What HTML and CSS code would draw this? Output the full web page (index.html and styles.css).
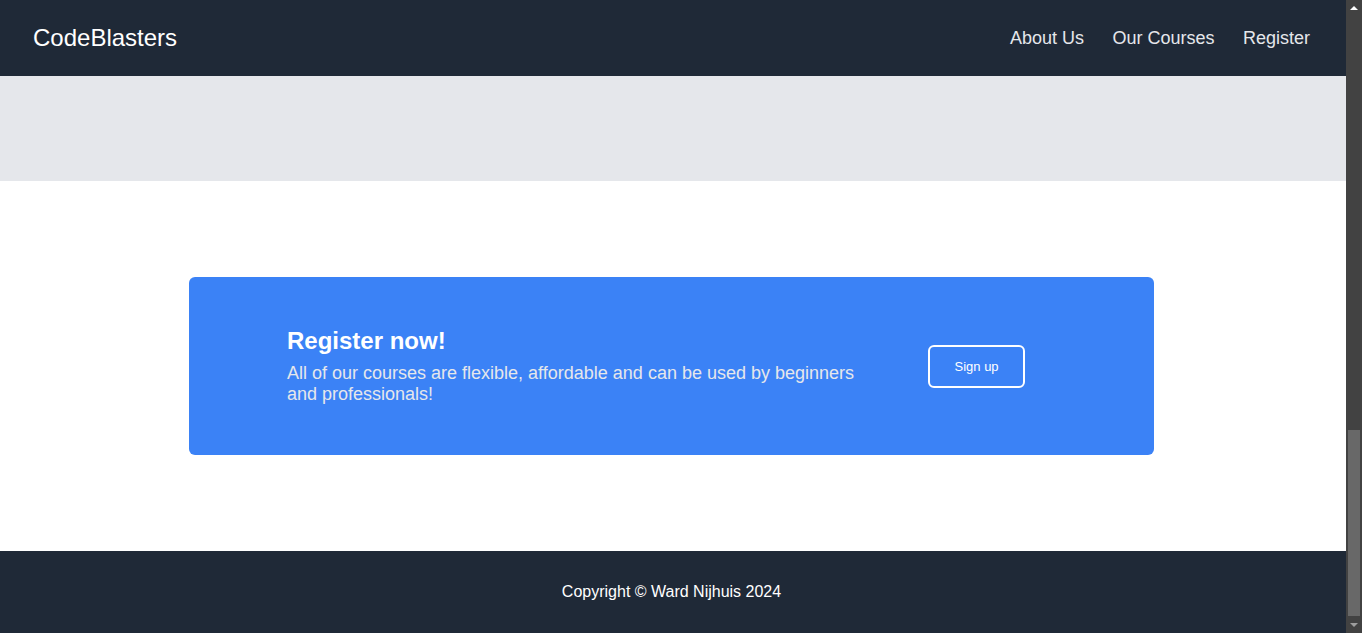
FILE: index.html
```html
<!DOCTYPE html>
<html lang="en">
<head>
<meta charset="utf-8">
<title>CodeBlasters</title>
<link rel="stylesheet" href="styles.css">
</head>
<body>
<div class="window">
  <div class="page">
    <header class="site-header">
      <a class="logo" href="#">CodeBlasters</a>
      <nav class="nav">
        <a href="#">About Us</a>
        <a href="#">Our Courses</a>
        <a href="#">Register</a>
      </nav>
    </header>
    <main class="main">
      <section class="hero"></section>
      <section class="cta-section">
        <div class="cta-card">
          <div class="cta-text">
            <h2 class="cta-title">Register now!</h2>
            <p class="cta-desc">All of our courses are flexible, affordable and can be used by beginners and professionals!</p>
          </div>
          <a class="cta-button" href="#">Sign up</a>
        </div>
      </section>
    </main>
    <footer class="site-footer">
      <p>Copyright © Ward Nijhuis 2024</p>
    </footer>
  </div>
  <div class="scrollbar" aria-hidden="true">
    <div class="scroll-btn"><span class="arrow-up"></span></div>
    <div class="scroll-track"><div class="scroll-thumb"></div></div>
    <div class="scroll-btn"><span class="arrow-down"></span></div>
  </div>
</div>
</body>
</html>
```
FILE: styles.css
```css
* {
  box-sizing: border-box;
}
html, body {
  height: 100%;
}
body {
  margin: 0;
  overflow: hidden;
  font-family: "Liberation Sans", Arial, sans-serif;
  background: #ffffff;
  color: #111827;
}
a {
  text-decoration: none;
}
.window {
  display: flex;
  height: 633px;
}
.page {
  flex: 1;
  display: flex;
  flex-direction: column;
  min-width: 0;
}
.site-header {
  display: flex;
  align-items: center;
  justify-content: space-between;
  height: 76px;
  padding: 0 36px 0 33px;
  background: #1f2937;
}
.logo {
  font-size: 24px;
  color: #ffffff;
}
.nav {
  display: flex;
  gap: 28.5px;
}
.nav a {
  font-size: 18px;
  color: #e5e7eb;
}
.main {
  flex: 1;
  display: flex;
  flex-direction: column;
}
.hero {
  height: 105px;
  background: #e5e7eb;
}
.cta-section {
  flex: 1;
  padding: 96px 0;
  background: #ffffff;
}
.cta-card {
  display: flex;
  align-items: center;
  gap: 65px;
  width: 965px;
  height: 178px;
  margin-left: 189px;
  padding-left: 98px;
  background: #3b82f6;
  border-radius: 6px;
}
.cta-text {
  width: 576px;
}
.cta-title {
  margin: 0 0 8px;
  font-size: 24px;
  font-weight: 700;
  color: #ffffff;
}
.cta-desc {
  margin: 0;
  font-size: 18px;
  color: #e5e7eb;
}
.cta-button {
  display: inline-block;
  padding: 12px 24.5px;
  border: 2px solid #ffffff;
  border-radius: 6px;
  font-size: 13px;
  line-height: 15px;
  color: #ffffff;
}
.site-footer {
  height: 82px;
  display: flex;
  align-items: center;
  justify-content: center;
  padding-right: 3px;
  background: #1f2937;
}
.site-footer p {
  margin: 0;
  font-size: 16px;
  color: #ffffff;
}
.scrollbar {
  width: 16px;
  display: flex;
  flex-direction: column;
  background: #424242;
}
.scroll-btn {
  height: 16px;
  display: flex;
  align-items: center;
  justify-content: center;
}
.arrow-up {
  width: 0;
  height: 0;
  border-left: 4px solid transparent;
  border-right: 4px solid transparent;
  border-bottom: 4px solid #ffffff;
}
.arrow-down {
  width: 0;
  height: 0;
  border-left: 4px solid transparent;
  border-right: 4px solid transparent;
  border-top: 4px solid #9e9e9e;
}
.scroll-track {
  flex: 1;
  display: flex;
  flex-direction: column;
  justify-content: flex-end;
  padding: 0 2px 1px;
}
.scroll-thumb {
  height: 186px;
  background: #686868;
}
```
